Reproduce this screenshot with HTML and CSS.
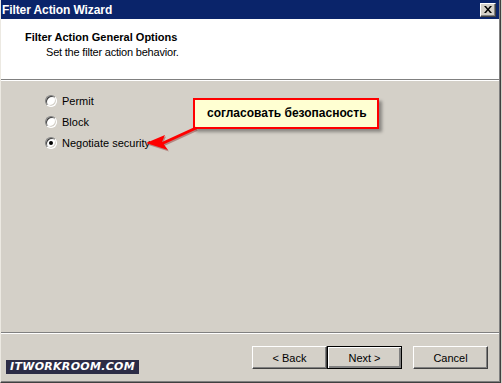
FILE: index.html
```html
<!DOCTYPE html>
<html lang="en">
<head>
    <meta charset="UTF-8">
    <title>Filter Action Wizard</title>
    <link rel="stylesheet" href="styles.css">
</head>
<body>
    <div class="window">
        <div class="frame">
            <!-- Заголовок окна -->
            <div class="titlebar">
                <span class="title">Filter Action Wizard</span>
                <span class="close-btn">
                    <svg width="8" height="7" viewBox="0 0 8 7">
                        <path d="M0 0h2l2 2.5L6 0h2L5 3.5 8 7H6L4 4.5 2 7H0l3-3.5z" fill="#000"/>
                    </svg>
                </span>
            </div>

            <div class="header">
                <div class="header-title">Filter Action General Options</div>
                <div class="header-sub">Set the filter action behavior.</div>
            </div>

            <div class="content">
                <label class="radio-row">
                    <span class="radio"></span>
                    <span>Permit</span>
                </label>
                <label class="radio-row">
                    <span class="radio"></span>
                    <span>Block</span>
                </label>
                <label class="radio-row">
                    <span class="radio checked"></span>
                    <span>Negotiate security</span>
                </label>

                <!-- Выноска -->
                <div class="callout">согласовать безопасность</div>
                <svg class="arrow" width="60" height="36" viewBox="0 0 60 36">
                    <path d="M55 8 L20 24" stroke="#7a0000" stroke-width="3" opacity="0.35" transform="translate(1,1.5)"/>
                    <path d="M5 23 L24 15 L21 22 L27 30 Z" fill="#7a0000" opacity="0.35" transform="translate(1,1.5)"/>
                    <path d="M55 8 L20 24" stroke="#ff0000" stroke-width="3"/>
                    <path d="M5 23 L24 15 L21 22 L27 30 Z" fill="#ff0000"/>
                </svg>
            </div>

            <div class="footer">
                <div class="watermark">ITWORKROOM.COM</div>
                <div class="buttons">
                    <button class="btn">&lt; Back</button>
                    <button class="btn default">Next &gt;</button>
                    <button class="btn cancel">Cancel</button>
                </div>
            </div>
        </div>
    </div>
</body>
</html>
```

FILE: styles.css
```css
* {
    margin: 0;
    padding: 0;
    box-sizing: border-box;
    font-family: Tahoma, "Liberation Sans", Arial, sans-serif;
    font-size: 11px;
}

body {
    background-color: #d4d0c8;
    color: black;
}

/* Рамка окна */
.window {
    width: 501px;
    height: 383px;
    border-right: 1px solid #404040;
    border-bottom: 1px solid #404040;
    border-left: 1px solid #ece9e2;
}

.frame {
    height: 100%;
    display: flex;
    flex-direction: column;
    border-right: 1px solid #808080;
    border-bottom: 1px solid #808080;
}

.titlebar {
    height: 19px;
    background: #0a246a;
    display: flex;
    align-items: center;
    justify-content: space-between;
    padding: 0 3px 0 1px;
}

.title {
    color: white;
    font-weight: bold;
    font-size: 12px;
    letter-spacing: -0.1px;
}

.close-btn {
    width: 16px;
    height: 14px;
    background: #d4d0c8;
    border: 1px solid;
    border-color: #fff #404040 #404040 #fff;
    box-shadow: inset -1px -1px 0 #808080;
    display: flex;
    align-items: center;
    justify-content: center;
}

.header {
    height: 62px;
    background: white;
    padding: 12px 0 0 24px;
    border-bottom: 1px solid #fff;
    box-shadow: inset 0 -1px 0 #808080;
}

.header-title {
    font-weight: bold;
    line-height: 13px;
}

.header-sub {
    margin: 2px 0 0 21px;
    line-height: 13px;
    letter-spacing: -0.2px;
}

.content {
    flex: 1;
    position: relative;
    padding: 9px 0 0 44px;
    border-bottom: 1px solid #fff;
    box-shadow: inset 0 -1px 0 #808080;
}

.radio-row {
    height: 21px;
    display: flex;
    align-items: center;
    gap: 5px;
}

.radio {
    width: 12px;
    height: 12px;
    border-radius: 50%;
    background: white;
    border: 1px solid;
    border-color: #808080 #fff #fff #808080;
    box-shadow: inset 1px 1px 0 #404040, inset -1px -1px 0 #d4d0c8;
    display: flex;
    align-items: center;
    justify-content: center;
}

.radio.checked::after {
    content: "";
    width: 4px;
    height: 4px;
    border-radius: 50%;
    background: black;
}

.callout {
    position: absolute;
    left: 192px;
    top: 17px;
    width: 186px;
    height: 31px;
    background: #ffffd2;
    border: 2px solid #ff0000;
    box-shadow: 3px 3px 3px rgba(0, 0, 0, 0.35);
    font-weight: bold;
    font-size: 12px;
    padding: 6px 0 0 12px;
}

.arrow {
    position: absolute;
    left: 140px;
    top: 39px;
}

.footer {
    height: 47px;
    display: flex;
    align-items: flex-start;
    padding: 12px 11px 0 5px;
}

.watermark {
    margin-top: 14px;
    background: #2c2c46;
    color: white;
    font-family: "DejaVu Sans", sans-serif;
    font-style: italic;
    font-weight: bold;
    font-size: 11px;
    line-height: 14px;
    padding: 0 4px;
    letter-spacing: 0.3px;
}

.buttons {
    margin-left: auto;
    display: flex;
}

.btn {
    width: 75px;
    height: 23px;
    background: #d4d0c8;
    border: 1px solid;
    border-color: #fff #404040 #404040 #fff;
    box-shadow: inset -1px -1px 0 #808080;
    font-size: 11px;
}

.btn.default {
    border: 1px solid #000;
    box-shadow: inset 1px 1px 0 #fff, inset -2px -2px 0 #808080;
}

.btn.cancel {
    margin-left: 11px;
}
```
